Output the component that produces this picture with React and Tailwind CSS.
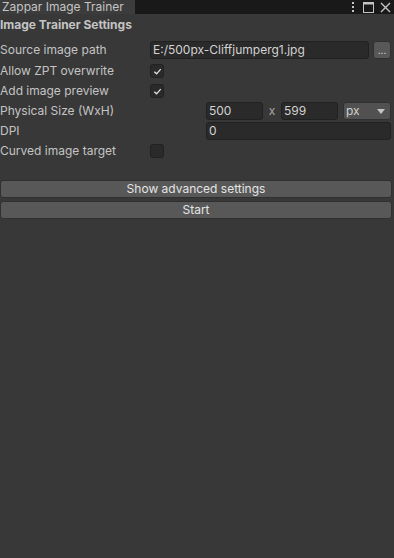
import React from "react";

const Check = () => (
  <svg viewBox="0 0 10 10" className="h-[9px] w-[9px]">
    <path d="M1.5 5.2 L4 7.6 L8.6 2.4" fill="none" stroke="#e0e0e0" strokeWidth="1.5" />
  </svg>
);

const Checkbox = ({ checked }) => (
  <div className="flex h-[14px] w-[14px] items-center justify-center rounded-[3px] border border-[#212121] bg-[#2a2a2a]">
    {checked && <Check />}
  </div>
);

const Field = ({ children, className = "" }) => (
  <div
    className={`flex h-[18px] items-center rounded-[3px] border border-[#212121] bg-[#2a2a2a] px-[2px] text-[#d2d2d2] ${className}`}
  >
    {children}
  </div>
);

const Row = ({ label, children, tall }) => (
  <div className={`flex items-center ${tall ? "h-[22px]" : "h-[20px]"}`}>
    <div className="w-[150px] shrink-0">{label}</div>
    <div className="flex flex-1 items-center pr-[3px]">{children}</div>
  </div>
);

const App = () => {
  return (
    <div
      className="flex h-[558px] w-[394px] flex-col bg-[#383838] text-[12px] text-[#c4c4c4]"
      style={{ fontFamily: "Inter, 'Noto Sans', sans-serif" }}
    >
      <div className="flex h-[14px] items-stretch bg-[#191919]">
        <div className="flex w-[135px] items-center bg-[#3c3c3c] pl-[2px] text-[12px] leading-none text-[#c4c4c4]">
          Zappar Image Trainer
        </div>
        <div className="flex-1" />
        <div className="flex items-center pr-[3px] text-[#c4c4c4]">
          <svg viewBox="0 0 4 12" className="mr-[8px] h-[12px] w-[4px]">
            <rect x="1" y="1" width="2" height="2" fill="#c4c4c4" />
            <rect x="1" y="5" width="2" height="2" fill="#c4c4c4" />
            <rect x="1" y="9" width="2" height="2" fill="#c4c4c4" />
          </svg>
          <svg viewBox="0 0 11 11" className="mr-[6px] h-[11px] w-[11px]">
            <rect x="0.5" y="0.5" width="10" height="10" fill="none" stroke="#c4c4c4" />
            <rect x="0.5" y="0.5" width="10" height="2" fill="#c4c4c4" />
          </svg>
          <svg viewBox="0 0 11 11" className="h-[11px] w-[11px]">
            <path d="M1 1 L10 10 M10 1 L1 10" stroke="#c4c4c4" strokeWidth="1.4" />
          </svg>
        </div>
      </div>

      <div className="flex h-[21px] items-center font-bold text-[#c4c4c4]">
        Image Trainer Settings
      </div>

      <div className="mt-[4px] flex flex-col">
        <Row label="Source image path" tall>
          <Field className="flex-1">E:/500px-Cliffjumperg1.jpg</Field>
          <div className="ml-[4px] flex h-[18px] w-[18px] items-end justify-center rounded-[3px] border border-[#303030] bg-[#585858] pb-[3px] text-[10px] leading-none text-[#e0e0e0]">
            ...
          </div>
        </Row>
        <Row label="Allow ZPT overwrite">
          <Checkbox checked />
        </Row>
        <Row label="Add image preview">
          <Checkbox checked />
        </Row>
        <Row label="Physical Size (WxH)">
          <div className="ml-[56px] flex flex-1 items-center">
            <Field className="w-[57px]">500</Field>
            <span className="w-[18px] text-center text-[#a8a8a8]">x</span>
            <Field className="w-[57px]">599</Field>
            <div className="ml-[5px] flex h-[18px] flex-1 items-center justify-between rounded-[3px] border border-[#303030] bg-[#515151] pl-[2px] pr-[5px] text-[#d2d2d2]">
              <span>px</span>
              <svg viewBox="0 0 8 5" className="h-[5px] w-[8px]">
                <path d="M0 0 L8 0 L4 5 Z" fill="#c4c4c4" />
              </svg>
            </div>
          </div>
        </Row>
        <Row label="DPI">
          <Field className="ml-[56px] flex-1">0</Field>
        </Row>
        <Row label="Curved image target">
          <Checkbox />
        </Row>
      </div>

      <div className="mt-[19px] flex flex-col gap-[3px] pr-[2px]">
        <div className="flex h-[18px] items-center justify-center rounded-[3px] border border-[#303030] bg-[#585858] text-[#e4e4e4]">
          Show advanced settings
        </div>
        <div className="flex h-[18px] items-center justify-center rounded-[3px] border border-[#303030] bg-[#585858] text-[#e4e4e4]">
          Start
        </div>
      </div>
    </div>
  );
};

export default App;
